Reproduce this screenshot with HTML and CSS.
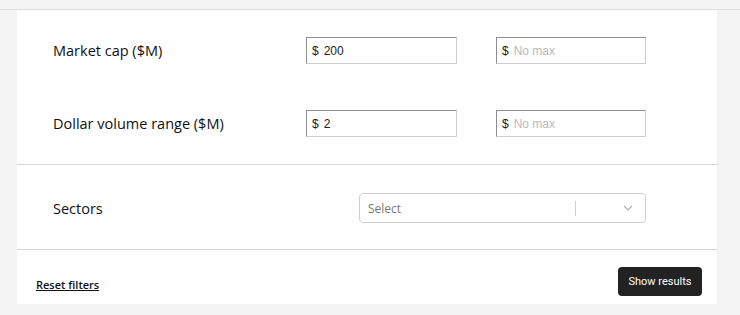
FILE: index.html
```html
<!DOCTYPE html>
<html lang="en">
<head>
  <meta charset="UTF-8" />
  <meta name="viewport" content="width=device-width, initial-scale=1.0"/>
  <title>Filters</title>
  <link rel="stylesheet" href="styles.css">
</head>
<body>

  <div class="topbar"></div>

  <!-- Filter panel -->
  <section class="panel">
    <div class="ranges">
      <div class="range-row">
        <label class="label">Market cap ($M)</label>
        <div class="money-input">
          <span class="currency">$</span>
          <span class="value">200</span>
        </div>
        <div class="money-input">
          <span class="currency">$</span>
          <span class="placeholder">No max</span>
        </div>
      </div>
      <div class="range-row">
        <label class="label">Dollar volume range ($M)</label>
        <div class="money-input">
          <span class="currency">$</span>
          <span class="value">2</span>
        </div>
        <div class="money-input">
          <span class="currency">$</span>
          <span class="placeholder">No max</span>
        </div>
      </div>
    </div>

    <div class="sectors">
      <label class="label">Sectors</label>
      <div class="select">
        <span class="select-text">Select</span>
        <span class="select-sep"></span>
        <svg class="chevron" width="10" height="6" viewBox="0 0 10 6">
          <path d="M1 1l4 4 4-4" fill="none" stroke="#b0b0b0" stroke-width="1.2"/>
        </svg>
      </div>
    </div>

    <div class="footer">
      <a href="#" class="reset">Reset filters</a>
      <button class="show">Show results</button>
    </div>
  </section>

</body>
</html>
```

FILE: styles.css
```css
* {
  padding: 0;
  margin: 0;
  box-sizing: border-box;
}

body {
  background: #f3f3f3;
  font-family: "Open Sans", Arial, sans-serif;
  color: #1a1a1a;
  overflow: hidden;
}

.topbar {
  height: 10px;
  border-bottom: 1px solid #dcdfe3;
}

.panel {
  width: 700px;
  margin-left: 17px;
  background: #fff;
}

.label {
  font-size: 14.5px;
  color: #111;
}

.ranges {
  padding: 27px 0 27px 36px;
  display: flex;
  flex-direction: column;
  gap: 46px;
}

.range-row {
  display: grid;
  grid-template-columns: 214px 151px 150px;
  column-gap: 39px;
  align-items: center;
  height: 27px;
}

.money-input {
  height: 27px;
  display: flex;
  align-items: center;
  gap: 5px;
  padding-left: 5px;
  border: 1px solid #cfcfcf;
  border-top-color: #8f8f8f;
  border-left-color: #8f8f8f;
  font-family: "Liberation Sans", Arial, sans-serif;
  font-size: 12px;
}

.currency {
  color: #222;
}

.value {
  color: #222;
}

.placeholder {
  color: #b8b8b8;
}

.sectors {
  border-top: 1px solid #d6d6d6;
  border-bottom: 1px solid #d6d6d6;
  padding: 28px 71px 26px 36px;
  display: flex;
  align-items: center;
  justify-content: space-between;
}

.select {
  width: 287px;
  height: 30px;
  border: 1px solid #cfcfcf;
  border-radius: 4px;
  display: flex;
  align-items: center;
  padding: 0 12px 0 8px;
}

.select-text {
  flex: 1;
  font-size: 12px;
  color: #777;
}

.select-sep {
  width: 1px;
  height: 15px;
  background: #cfcfcf;
  margin-right: 47px;
}

.footer {
  display: flex;
  align-items: center;
  justify-content: space-between;
  padding: 17px 15px 8px 19px;
}

.reset {
  font-size: 11px;
  font-weight: 600;
  color: #111;
  text-decoration: underline;
  margin-top: 6px;
}

.show {
  width: 84px;
  height: 29px;
  border: none;
  border-radius: 4px;
  background: #222;
  color: #fff;
  font-family: Roboto, Arial, sans-serif;
  font-size: 11px;
  cursor: pointer;
}
```
